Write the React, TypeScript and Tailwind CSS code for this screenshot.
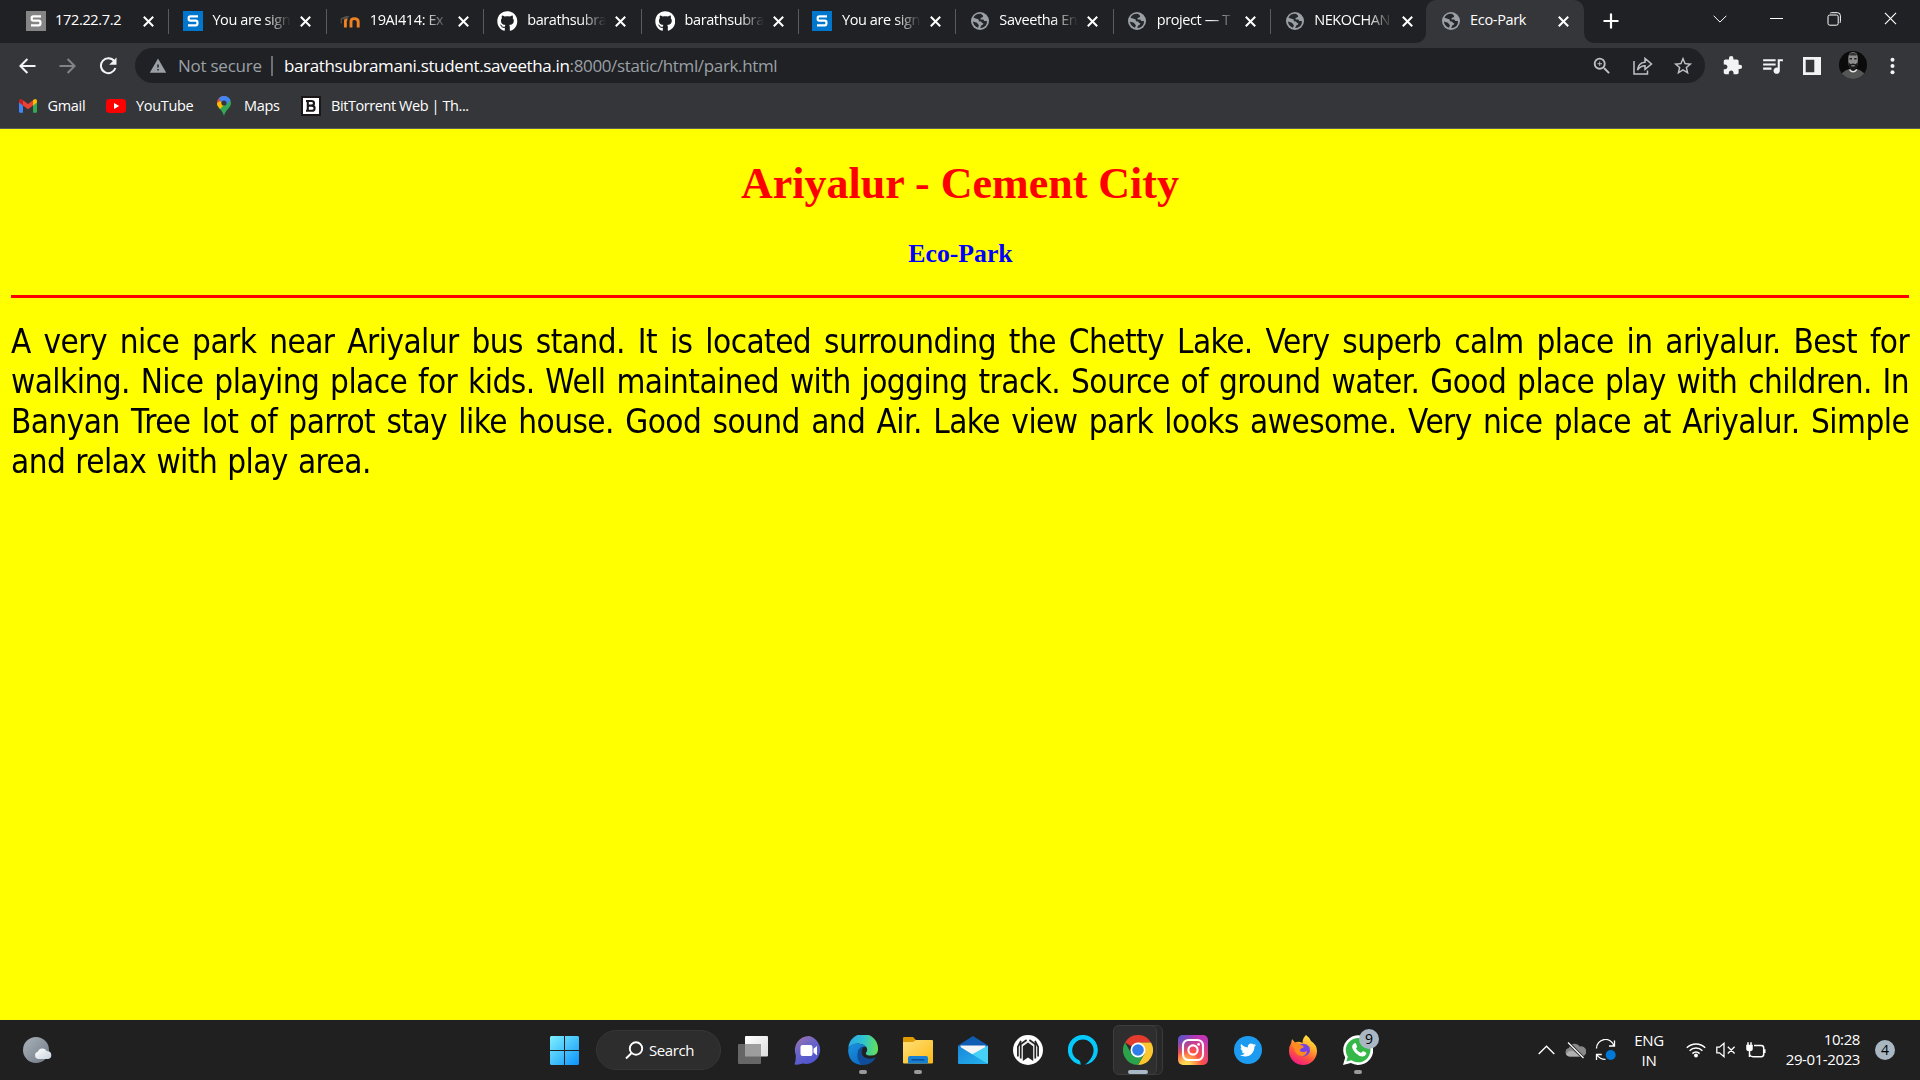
import React from 'react';
import { FaGithub, FaTwitter } from 'react-icons/fa';
import { MdExtension, MdQueueMusic, MdStarBorder, MdZoomIn, MdWarning } from 'react-icons/md';

type Kind = 'sGray' | 'sBlue' | 'moodle' | 'github' | 'globe';

const tabs: { title: string; kind: Kind; active?: boolean; fade?: boolean }[] = [
  { title: '172.22.7.2', kind: 'sGray' },
  { title: 'You are sign', kind: 'sBlue', fade: true },
  { title: '19AI414: Ex', kind: 'moodle', fade: true },
  { title: 'barathsubra', kind: 'github', fade: true },
  { title: 'barathsubra', kind: 'github', fade: true },
  { title: 'You are sign', kind: 'sBlue', fade: true },
  { title: 'Saveetha En', kind: 'globe', fade: true },
  { title: 'project — T', kind: 'globe', fade: true },
  { title: 'NEKOCHAN', kind: 'globe', fade: true },
  { title: 'Eco-Park', kind: 'globe', active: true },
];

function SMark({ color }: { color: string }) {
  return (
    <svg width="20" height="20" viewBox="0 0 20 20">
      <rect width="20" height="20" fill={color} />
      <path d="M15 5.3H7.3Q5.7 5.3 5.7 6.8V8Q5.7 9.6 7.3 9.6H12.8Q14.4 9.6 14.4 11.2V12.6Q14.4 14.4 12.8 14.4H5" fill="none" stroke="#fff" strokeWidth="2.2" />
    </svg>
  );
}

function Favicon({ kind }: { kind: Kind }) {
  if (kind === 'sGray') return <SMark color="#858585" />;
  if (kind === 'sBlue') return <SMark color="#0077cc" />;
  if (kind === 'github') return <FaGithub size={20.6} color="#fff" className="shrink-0" />;
  if (kind === 'moodle')
    return (
      <svg width="20" height="20" viewBox="0 0 20 20">
        <path d="M5.4 16.5V10.2Q5.4 8 7.4 8M11 16.5V10.5Q11 7.6 14.4 7.6Q18.2 7.6 18.2 10.8V16.5" fill="none" stroke="#ef8122" strokeWidth="2.9" />
        <path d="M0.4 7.5L6 5L9.6 5.2L7.5 7.5L4 8.4Z" fill="#55504c" />
        <path d="M1.2 7.5V12.5" stroke="#6b5a50" strokeWidth="1" />
      </svg>
    );
  return (
    <svg width="20" height="20" viewBox="0 0 20 20">
      <circle cx="10" cy="10" r="9" fill="#9aa0a6" />
      <path d="M10.9 2.8Q5.4 2.2 3.5 6.8L8.2 8.3Q9.2 8.8 8.8 10.2L10.8 10.4Q12 10.6 11.8 12L13.4 12.2Q13.2 14 11.2 14.4L10.2 17.1Q15.2 16.8 16.8 12.4L16.9 10H14.3L13.3 8.4H10.6V6.9L13 5.9V4.6Z M2.9 10.6L6.9 11.7L8.9 14.2L8 16.8Q3.5 15 2.9 10.6Z" fill="#26272b" />
    </svg>
  );
}

function Cross({ size = 11, w = 2 }: { size?: number; w?: number }) {
  return (
    <svg width={size} height={size} viewBox="0 0 11 11" className="shrink-0">
      <path d="M0.8 0.8L10.2 10.2M10.2 0.8L0.8 10.2" stroke="#fff" strokeWidth={w} />
    </svg>
  );
}

function TabStrip() {
  return (
    <div className="flex h-[43px] bg-[#202124] pl-[11px]">
      {tabs.map((t, i) => (
        <div
          key={i}
          className={
            t.active
              ? 'relative ml-[-1.5px] flex h-[43px] w-[157.9px] shrink-0 items-center rounded-t-[10px] bg-[#35363a] pb-px'
              : 'relative flex h-[43px] w-[157.4px] shrink-0 items-center pb-px'
          }
        >
          <div className="ml-[14.5px] flex size-5 shrink-0 items-center justify-center">
            <Favicon kind={t.kind} />
          </div>
          <div
            className={
              t.fade
                ? 'ml-[9.5px] w-[79px] shrink-0 self-start whitespace-nowrap text-[14.5px] leading-[40px] tracking-[-0.4px] text-white [mask-image:linear-gradient(to_right,#000_68%,transparent)]'
                : 'ml-[9.5px] w-[79px] shrink-0 self-start whitespace-nowrap text-[14.5px] leading-[40px] tracking-[-0.32px] text-white'
            }
          >
            {t.title}
          </div>
          <div className="ml-[9px] flex w-[11px]">
            <Cross />
          </div>
          {!t.active && i !== 8 && <div className="absolute right-[-1px] top-[9px] h-[25px] w-px bg-[#5a5b5f]" />}
          {t.active && (
            <>
              <svg className="absolute left-[-10px] top-[33px]" width="10" height="10"><path d="M10 0V10H0A10 10 0 0 0 10 0Z" fill="#35363a" /></svg>
              <svg className="absolute right-[-10px] top-[33px]" width="10" height="10"><path d="M0 0V10H10A10 10 0 0 1 0 0Z" fill="#35363a" /></svg>
            </>
          )}
        </div>
      ))}
      <svg className="ml-[19px] mt-[13px]" width="16" height="16" viewBox="0 0 16 16"><path d="M8 0.5V15.5M0.5 8H15.5" stroke="#fff" strokeWidth="2.2" /></svg>
      <div className="ml-auto mr-[1px] flex h-[37px] items-center">
        <div className="flex w-[57px] justify-center"><svg width="14" height="8" viewBox="0 0 14 8"><path d="M0.7 0.8L7 7.1L13.3 0.8" fill="none" stroke="#fff" /></svg></div>
        <div className="flex w-[57px] justify-center"><div className="h-px w-[13px] bg-white" /></div>
        <div className="flex w-[57px] justify-center">
          <svg width="14" height="14" viewBox="0 0 14 14" fill="none" stroke="#fff"><rect x="1" y="3" width="10.2" height="10.2" rx="1.8" /><path d="M3.2 1.2Q3.8 0.7 4.6 0.7H10.4Q13.4 0.7 13.4 3.7V9.5Q13.4 10.5 12.8 11" /></svg>
        </div>
        <div className="flex w-[57px] justify-center"><Cross size={13} w={1} /></div>
      </div>
    </div>
  );
}

function Toolbar() {
  return (
    <div className="flex h-[46px] items-start bg-[#35363a] pt-[5px]">
      <div className="flex h-[35px] w-[135px] items-center pl-[19px]">
        <svg width="17" height="16" viewBox="0 0 17 16" fill="none" stroke="#f1f3f4" strokeWidth="2"><path d="M16.5 8H1.5M8.4 1L1.4 8L8.4 15" /></svg>
        <svg className="ml-[23px]" width="17" height="16" viewBox="0 0 17 16" fill="none" stroke="#828387" strokeWidth="2"><path d="M0.5 8H15.5M8.6 1L15.6 8L8.6 15" /></svg>
        <svg className="ml-[22.5px]" width="18" height="18" viewBox="0 0 18 18"><path d="M15.2 4.2A7.4 7.4 0 1 0 16.4 11" fill="none" stroke="#f1f3f4" strokeWidth="2" /><path d="M17.5 0.5V7.8H10.2Z" fill="#f1f3f4" /></svg>
      </div>
      <div className="flex h-[35px] w-[1570px] items-center rounded-full bg-[#202124] text-[17px] leading-[35px]">
        <MdWarning className="ml-[14px]" size={18} color="#9aa0a6" />
        <span className="ml-[11px] w-[83px] whitespace-nowrap tracking-[-0.25px] text-[#9aa0a6]">Not secure</span>
        <span className="ml-[10px] h-[20px] w-[2px] bg-[#6d7074]" />
        <span className="ml-[11px] whitespace-nowrap tracking-[-0.36px] text-[#9aa0a6]">
          <span className="text-white">barathsubramani.student.saveetha.in</span>:8000/static/html/park.html
        </span>
        <div className="ml-auto mr-[11px] flex items-center text-[#bdc1c6]">
          <MdZoomIn size={22} />
          <svg className="ml-[20px]" width="20" height="18" viewBox="0 0 20 18" fill="none" stroke="#bdc1c6" strokeWidth="1.5"><path d="M1 4V17H14.5V13.5M4.5 13C5 8 8 5.5 12 5.2V1.4L18.5 7L12 12.4V8.8C8.5 8.8 6.5 10 4.5 13Z" /></svg>
          <MdStarBorder className="ml-[19px]" size={22} />
        </div>
      </div>
      <div className="flex h-[35px] flex-1 items-center text-[#f1f3f4]">
        <MdExtension className="ml-[17px]" size={21} />
        <MdQueueMusic className="ml-[17px]" size={25} />
        <svg className="ml-[18px]" width="18" height="18" viewBox="0 0 18 18"><path d="M0 0H18V18H0ZM2.7 2.7V15.3H11.3V2.7Z" fill="#f1f3f4" fillRule="evenodd" /></svg>
        <svg className="ml-[18px] mb-px" width="28" height="28" viewBox="0 0 28 28">
          <clipPath id="avatar"><circle cx="14" cy="14" r="14" /></clipPath>
          <g clipPath="url(#avatar)">
            <rect width="28" height="28" fill="#0b0b0b" />
            <path d="M1 28Q2 20 10 18L14 21L18 18Q26 20 27 28Z" fill="#555" />
            <path d="M9.3 7Q9.5 1 14 1Q18.7 1 18.8 7V12Q18 18 14 18.5Q10 18 9.3 12Z" fill="#8d8d8d" />
            <path d="M10.2 3.2Q14 0.4 17.8 3.2L17.5 4.5H10.5Z" fill="#333" />
            <path d="M9.3 11L11.5 13.3Q14 11.8 16.6 13.3L18.8 11Q18.5 19 14 19Q9.8 19 9.3 11Z" fill="#1a1a1a" />
            <path d="M10.5 7.8H13M15.2 7.8H17.6" stroke="#222" strokeWidth="1.4" />
            <path d="M12.3 14.8H15.8" stroke="#aaa" />
            <path d="M10.5 18.5Q14 23 17.8 18.5" fill="none" stroke="#e8e8e8" strokeWidth="1.4" />
          </g>
        </svg>
        <svg className="ml-[23px]" width="5" height="18" viewBox="0 0 5 18" fill="#f1f3f4"><circle cx="2.5" cy="2.7" r="2" /><circle cx="2.5" cy="9" r="2" /><circle cx="2.5" cy="15.3" r="2" /></svg>
      </div>
    </div>
  );
}

function Bookmarks() {
  return (
    <div className="flex h-[40px] items-center border-b border-[#5b5c5f] bg-[#35363a] pb-[5px] pl-[19px] text-[14.5px] leading-5 tracking-[-0.32px] text-white">
      <svg width="18" height="14" viewBox="0 0 18 14">
        <path d="M0 2V12.8Q0 13.8 1 13.8H4V6Z" fill="#4285f4" /><path d="M18 2V12.8Q18 13.8 17 13.8H14V6Z" fill="#34a853" />
        <path d="M4 1.3L9 5L14 1.3V6.5L9 10.3L4 6.5Z" fill="#ea4335" /><path d="M0 2Q0.3-0.9 3.2 0.6L4 1.3V6.5L0 3.6Z" fill="#c5221f" /><path d="M18 2Q17.7-0.9 14.8 0.6L14 1.3V6.5L18 3.6Z" fill="#fbbc04" />
      </svg>
      <span className="ml-[10.5px] w-[38.5px] whitespace-nowrap">Gmail</span>
      <svg className="ml-[20px]" width="20" height="14" viewBox="0 0 20 14"><rect width="20" height="14" rx="3.4" fill="#f00" /><path d="M8 4L13.2 7L8 10Z" fill="#fff" /></svg>
      <span className="ml-[10px] w-[58px] whitespace-nowrap">YouTube</span>
      <svg className="ml-[23px]" width="14" height="20" viewBox="0 0 14 20">
        <clipPath id="pin"><path d="M7 0A7 7 0 0 1 14 7C14 12 8.5 13.5 7 20C5.5 13.5 0 12 0 7A7 7 0 0 1 7 0Z" /></clipPath>
        <g clipPath="url(#pin)"><rect width="14" height="20" fill="#34a853" /><path d="M0 0H10L0 11Z" fill="#ea4335" /><path d="M3-1H14V4L8 10L2 3Z" fill="#4285f4" /><path d="M0 7L3 5L7 9L1.5 14.5H0Z" fill="#fbbc04" /></g>
        <circle cx="7" cy="7" r="2.6" fill="#35363a" />
      </svg>
      <span className="ml-[13px] w-[37px] whitespace-nowrap">Maps</span>
      <svg className="ml-[20px]" width="20" height="20" viewBox="0 0 20 20"><rect width="20" height="20" fill="#1b1718" /><rect x="2" y="2" width="16" height="16" fill="#fff" /><path d="M6.8 5H10.3Q13 5 13 7.2Q13 9.6 10.3 9.6H6.8ZM6.8 9.6H10.8Q13.6 9.6 13.6 12.2Q13.6 14.8 10.8 14.8H6.8V5M5 5H7M5 14.8H7" fill="none" stroke="#1b1718" strokeWidth="2.1" /></svg>
      <span className="ml-[10px] whitespace-nowrap tracking-[-0.42px]">BitTorrent Web | Th...</span>
    </div>
  );
}

const lines = [
  'A very nice park near Ariyalur bus stand. It is located surrounding the Chetty Lake. Very superb calm place in ariyalur. Best for',
  'walking. Nice playing place for kids. Well maintained with jogging track. Source of ground water. Good place play with children. In',
  'Banyan Tree lot of parrot stay like house. Good sound and Air. Lake view park looks awesome. Very nice place at Ariyalur. Simple',
];

function Page() {
  return (
    <main className="h-[891px] bg-[#ffff00] px-[11px] pt-[29px]">
      <h1 className="text-center font-['Liberation_Serif'] text-[44px] font-bold leading-[51px] text-[#ff0000]">Ariyalur - Cement City</h1>
      <h3 className="mt-[30px] pl-px text-center font-['Liberation_Serif'] text-[25.74px] font-bold leading-[30px] text-[#0000ff]">Eco-Park</h3>
      <div className="mt-[26px] h-[3px] bg-[#ff0000]" />
      <div className="mt-[24px] w-[2109px] origin-left scale-x-90 font-['DejaVu_Sans'] text-[33px] leading-[40px] tracking-[-0.62px] text-black">
        {lines.map((l) => (
          <p key={l} className="whitespace-nowrap [text-align-last:justify]">{l}</p>
        ))}
        <p className="[word-spacing:1.3px]">and relax with play area.</p>
      </div>
    </main>
  );
}

function Slot({ children, dot }: { children: React.ReactNode; dot?: boolean }) {
  return (
    <div className="relative flex h-[60px] w-[55px] items-center justify-center">
      {children}
      {dot && <div className="absolute bottom-[6px] left-[23.5px] h-[4px] w-[8px] rounded-full bg-[#9a9a9a]" />}
    </div>
  );
}

function Taskbar() {
  return (
    <footer className="flex h-[60px] items-center bg-[#202020] text-[15px] text-white">
      <div className="w-[536.5px] pl-[22px]">
        <svg width="30" height="28" viewBox="0 0 30 28">
          <defs><linearGradient id="moon" x1="0" y1="0" x2="1" y2="1"><stop stopColor="#aab2bb" /><stop offset="1" stopColor="#717a85" /></linearGradient><linearGradient id="cl" x2="1" y2="1"><stop stopColor="#fff" /><stop offset="1" stopColor="#c9d3df" /></linearGradient></defs>
          <circle cx="14" cy="14" r="13" fill="url(#moon)" />
          <path d="M16 23A3.7 3.7 0 0 1 15.8 15.8A4.8 4.8 0 0 1 24.8 15.3A3.8 3.8 0 0 1 26 23Z" fill="url(#cl)" />
        </svg>
      </div>
      <Slot>
        <svg width="29" height="29" viewBox="0 0 29 29">
          <defs><linearGradient id="win" gradientUnits="userSpaceOnUse" x1="0" y1="0" x2="29" y2="29"><stop stopColor="#7df0ff" /><stop offset="0.5" stopColor="#46c3fb" /><stop offset="1" stopColor="#0a92fb" /></linearGradient></defs>
          <path d="M1 0H14V14H0V1ZM15 0H28L29 1V14H15ZM0 15H14V29H1L0 28ZM15 15H29V28L28 29H15Z" fill="url(#win)" />
        </svg>
      </Slot>
      <div className="ml-[4.5px] mr-[4.5px] flex h-[40px] w-[125px] items-center rounded-full border border-[#363636] bg-[#2d2d2d] pl-[28px]">
        <svg width="19" height="19" viewBox="0 0 19 19" fill="none" stroke="#fff" strokeWidth="1.9"><circle cx="11" cy="7.5" r="6.2" /><path d="M6.6 12L1 17.5" /></svg>
        <span className="ml-[5px] tracking-[-0.42px]">Search</span>
      </div>
      <Slot>
        <svg width="30" height="28" viewBox="0 0 30 28">
          <defs><linearGradient id="tv" x2="1" y2="1"><stop stopColor="#fff" /><stop offset="1" stopColor="#dcdcdc" /></linearGradient></defs>
          <rect x="7" y="0" width="23" height="20.5" rx="1" fill="url(#tv)" /><rect x="0" y="8" width="23" height="20" rx="1" fill="#666" /><rect x="7" y="8" width="16" height="12.5" fill="#9d9d9d" />
        </svg>
      </Slot>
      <Slot>
        <svg width="29" height="29" viewBox="0 0 29 29">
          <defs><linearGradient id="chat" x1="0" y1="0" x2="0.6" y2="1"><stop stopColor="#a575a8" /><stop offset="0.5" stopColor="#6864c8" /><stop offset="1" stopColor="#4e55cf" /></linearGradient></defs>
          <path d="M15 0A14 14 0 1 1 9 27.6Q5 29 0.5 28.6Q2 25.5 1.8 19A14 14 0 0 1 15 0Z" fill="url(#chat)" />
          <rect x="6.5" y="9" width="12" height="11" rx="2" fill="#fff" /><path d="M19.5 12.8L23 10V19.4L19.5 16.5Z" fill="#fff" />
        </svg>
      </Slot>
      <Slot dot>
        <svg width="30" height="30" viewBox="0 0 30 30">
          <defs>
            <linearGradient id="e1" x1="0" y1="0.3" x2="1" y2="0.4"><stop stopColor="#2aa8ea" /><stop offset="0.5" stopColor="#2fc3cf" /><stop offset="1" stopColor="#63e05a" /></linearGradient>
            <linearGradient id="e2" x2="0.6" y2="1"><stop stopColor="#1b94dd" /><stop offset="1" stopColor="#0c6cc8" /></linearGradient>
          </defs>
          <path d="M0.3 13A14.8 14.8 0 0 1 30 14.5Q30 20.5 23 20.6Q17.5 20.5 17.8 18Q20.5 15 18 11.5Q13 7 6 9Q2 10.5 0.3 13Z" fill="url(#e1)" />
          <path d="M0.2 14Q3 8 10 8.5Q16 9 18.5 12Q13.5 10.5 10.6 15Q8 22 15 29.9Q2 30 0.2 17Z" fill="url(#e2)" />
          <path d="M11 15Q7 22 13 29.8Q23 31 28 22.3Q24 24.8 18 23Q13 21 13.8 16Q14 12.5 16 11.5Q12.5 11.5 11 15Z" fill="#114c99" />
        </svg>
      </Slot>
      <Slot dot>
        <svg width="30" height="27" viewBox="0 0 30 27">
          <defs><linearGradient id="fo" x2="1" y2="1"><stop stopColor="#ffe07a" /><stop offset="1" stopColor="#fdb912" /></linearGradient></defs>
          <path d="M0 1.2Q0 0 1.2 0H10L13 3V8H0Z" fill="#e09b00" /><path d="M0 5H10L13 3H29Q30 3 30 4V25.5Q30 26.5 29 26.5H1Q0 26.5 0 25.5Z" fill="url(#fo)" />
          <path d="M5 26.5V21Q5 19 7 19H23Q25 19 25 21V26.5Z" fill="#1580d4" /><rect x="8.5" y="22" width="13" height="1.6" fill="#0b4f97" />
        </svg>
      </Slot>
      <Slot>
        <svg width="30" height="28" viewBox="0 0 30 28">
          <defs><linearGradient id="ma" x2="1" y2="1"><stop stopColor="#1a86d8" /><stop offset="1" stopColor="#25b3ef" /></linearGradient></defs>
          <path d="M0 9.5L15 0L30 9.5L28 14H2Z" fill="#0e5cb3" /><path d="M2.5 9.5H27.5V16L15 22L2.5 16Z" fill="#f5f5f5" />
          <path d="M30 9.5L12 19.5L30 28Z" fill="#46d0f6" /><path d="M0 9.5L30 28H1Q0 28 0 27Z" fill="url(#ma)" />
        </svg>
      </Slot>
      <Slot>
        <svg width="30" height="30" viewBox="0 0 30 30">
          <circle cx="15" cy="15" r="15" fill="#fff" />
          <path d="M8.4 23.5V10.5L15 6.4L21.6 10.5V23.5" fill="none" stroke="#242424" strokeWidth="0.1" />
          <path d="M9.8 11.2L15 7.6L20.2 11.2V26L15 22.6L9.8 26Z" fill="#242424" />
          <path d="M7.7 23.5V9.2L13.6 5M22.3 23.5V9.2L16.4 5M4.9 21.5V11.8L8 5.9M25.1 21.5V11.8L22 5.9" fill="none" stroke="#242424" strokeWidth="1.7" />
        </svg>
      </Slot>
      <Slot>
        <svg width="30" height="30" viewBox="0 0 30 30"><path d="M12.7 29.8A15 15 0 1 1 17 29.8C20 27.5 25.6 22 25.6 15.2A10.7 10.7 0 1 0 4.2 15.2C4.2 20.5 7.5 23.5 11.2 25.2Q12.7 26.2 12.7 29.8Z" fill="#05c8fb" /></svg>
      </Slot>
      <Slot>
        <div className="absolute left-[6px] top-[5px] h-[50px] w-[46px] rounded-[6px] border border-[#3a3a3a] bg-[#282828]" />
        <div className="absolute left-[2.5px] top-[5px] h-[50px] w-[44px] rounded-[6px] border border-[#3d3d3d] bg-[#2e2e2e]" />
        <svg className="relative" width="30" height="30" viewBox="0 0 30 30">
          <path d="M15 15L2 7.5A15 15 0 0 1 28 7.5H15Z" fill="#e33b2e" /><path d="M15 7.5H28A15 15 0 0 1 15 30L21.5 18.8Z" fill="#fcc62f" /><path d="M2 7.5A15 15 0 0 0 15 30L21.5 18.8L8.5 18.8Z" fill="#2ba24c" />
          <circle cx="15" cy="15" r="7.5" fill="#fff" /><circle cx="15" cy="15" r="5.8" fill="#2f7de9" />
        </svg>
        <div className="absolute bottom-[6px] left-[17.5px] h-[4px] w-[20px] rounded-full bg-[#a9b8c6]" />
      </Slot>
      <Slot>
        <svg width="30" height="30" viewBox="0 0 30 30">
          <defs>
            <radialGradient id="ig" cx="0.27" cy="1.05" r="1.05"><stop stopColor="#ffdd55" /><stop offset="0.15" stopColor="#ffd452" /><stop offset="0.5" stopColor="#ff5245" /><stop offset="1" stopColor="#c236b4" /></radialGradient>
            <radialGradient id="ig2" cx="0" cy="0" r="0.7"><stop stopColor="#3d62d2" /><stop offset="1" stopColor="#6a36d0" stopOpacity="0" /></radialGradient>
          </defs>
          <rect width="30" height="30" rx="5" fill="url(#ig)" /><rect width="30" height="30" rx="5" fill="url(#ig2)" />
          <g fill="none" stroke="#fff" strokeWidth="2.1"><rect x="5" y="5" width="20" height="20" rx="5.5" /><circle cx="15" cy="15" r="4.6" /></g><circle cx="20.6" cy="9.4" r="1.4" fill="#fff" />
        </svg>
      </Slot>
      <Slot>
        <div className="flex size-7 items-center justify-center rounded-full bg-[#1d9bf0]"><FaTwitter size={16} /></div>
      </Slot>
      <Slot>
        <svg width="30" height="30" viewBox="0 0 30 30">
          <defs><linearGradient id="ff" x1="0.8" y1="0" x2="0.3" y2="1"><stop stopColor="#fff04a" /><stop offset="0.35" stopColor="#ffb02a" /><stop offset="0.65" stopColor="#ff5a3a" /><stop offset="1" stopColor="#f0158a" /></linearGradient></defs>
          <path d="M18 0Q22 3 23 6Q29 10 29 16A14 14 0 0 1 1 16Q1 11 3 8.5L4 4L7 7.5Q11 6 14.5 8Q14.5 3 18 0Z" fill="url(#ff)" />
          <path d="M11 10Q17 6.5 21.5 12Q23.5 20 16 21.5Q9 21 9 15L12.5 13Z" fill="#7542e5" />
          <path d="M3.5 8.5Q8 7.5 12 10Q15 10 16 12L12.5 14Q11 15.5 13 16.5Q16 18 19 15.8Q18.5 21 13.5 21Q7 20 6 13Z" fill="#ff8a1d" />
        </svg>
      </Slot>
      <Slot dot>
        <svg width="30" height="30" viewBox="0 0 30 30"><path d="M0 30L2.2 22.5A15 14.8 0 1 1 7.8 28Z" fill="#fff" /><path d="M3.4 26.6L4.8 21.8A12.3 12.2 0 1 1 8.3 25.3Z" fill="#35b848" /></svg>
        <svg className="absolute left-[19px] top-[22px]" width="17" height="17" viewBox="0 0 17 17"><path d="M4.5 1.2Q5.5 0.8 6 1.8L7.1 4.4Q7.2 5.2 5.9 6.5Q7.7 9.9 11 11.1L12.4 9.5Q12.9 9 13.5 9.3L16 10.6Q16.5 11 16.2 12.1Q15.2 14.6 12.3 14.6Q9 14.2 5.8 11.2Q2.3 7.4 2.1 4.7Q2.2 2.3 4.5 1.2Z" fill="#fff" /></svg>
        <div className="absolute left-[28.5px] top-[9px] flex size-5 items-center justify-center rounded-full bg-[#a9b7c3] text-[14px] leading-5 text-black">9</div>
      </Slot>
      <div className="ml-auto flex h-[60px] items-center">
        <svg width="17" height="10" viewBox="0 0 17 10" fill="none" stroke="#fff" strokeWidth="1.4"><path d="M0.7 9L8.5 1.2L16.3 9" /></svg>
        <svg className="ml-[10.5px]" width="21" height="17" viewBox="0 0 21 17"><path d="M4.5 14.5A4.3 4.3 0 0 1 4 6A6 6 0 0 1 14.8 4.5A5 5 0 0 1 17.5 14.5Z" fill="#888" /><path d="M1 12Q4 7.5 8 9L17.5 14.5H4.5Q2 14.4 1 12Z" fill="#b0b0b0" /><path d="M3 0.5L18.5 16" stroke="#202020" strokeWidth="3" /><path d="M3 0.5L18.5 16" stroke="#fff" strokeWidth="1.3" /></svg>
        <svg className="ml-[9px]" width="22" height="22" viewBox="0 0 22 22" fill="none" stroke="#fff" strokeWidth="1.3"><path d="M1.5 9.5A9 9 0 0 1 19 6.5M19.5 1.5V7H14M6.8 15.5H1.5V21M2 16Q5 20.5 10.5 20.4" /><circle cx="15.7" cy="16" r="5" fill="#0078d7" stroke="none" /></svg>
        <div className="ml-[12.5px] w-[39px] text-center leading-5 tracking-[-0.3px]"><div>ENG</div><div>IN</div></div>
        <svg className="ml-[17.5px]" width="20" height="16" viewBox="0 0 20 16" fill="none" stroke="#fff" strokeWidth="1.5"><path d="M0.8 5.8A13 13 0 0 1 19.2 5.8M3.6 8.7A9 9 0 0 1 16.4 8.7M6.4 11.6A5.1 5.1 0 0 1 13.6 11.6" /><circle cx="10" cy="13.5" r="2" fill="#fff" stroke="none" /></svg>
        <svg className="ml-[10px]" width="20" height="16" viewBox="0 0 20 16" fill="none" stroke="#fff" strokeWidth="1.3"><path d="M0.8 5.2H3.5L8 1.3V14.7L3.5 10.8H0.8ZM11.8 4.7L18.6 11.5M18.6 4.7L11.8 11.5" /></svg>
        <svg className="ml-[10px]" width="21" height="17" viewBox="0 0 21 17" fill="none" stroke="#fff" strokeWidth="1.5"><path d="M8 3.5H15.3Q17.7 3.5 17.7 5.9V12.3Q17.7 14.7 15.3 14.7H7Q4.6 14.7 3.8 13M18.8 7.2V11" /><path d="M1 3.5H6V7Q6 8.5 3.5 8.5Q1 8.5 1 7ZM2 0.3V3.5M5 0.3V3.5" fill="#fff" /><path d="M3.5 8V15" /></svg>
        <div className="ml-[17px] mt-[-2px] w-[76px] whitespace-nowrap text-right leading-5 tracking-[-0.4px]"><div>10:28</div><div>29-01-2023</div></div>
        <div className="ml-[15px] mr-[25px] flex size-5 items-center justify-center rounded-full bg-[#a9b7c3] text-[14px] leading-5 text-black">4</div>
      </div>
    </footer>
  );
}

export default function App() {
  return (
    <div className="h-[1080px] w-[1920px] overflow-hidden bg-[#35363a] font-['Open_Sans','Noto_Sans',sans-serif]">
      <TabStrip />
      <Toolbar />
      <Bookmarks />
      <Page />
      <Taskbar />
    </div>
  );
}
